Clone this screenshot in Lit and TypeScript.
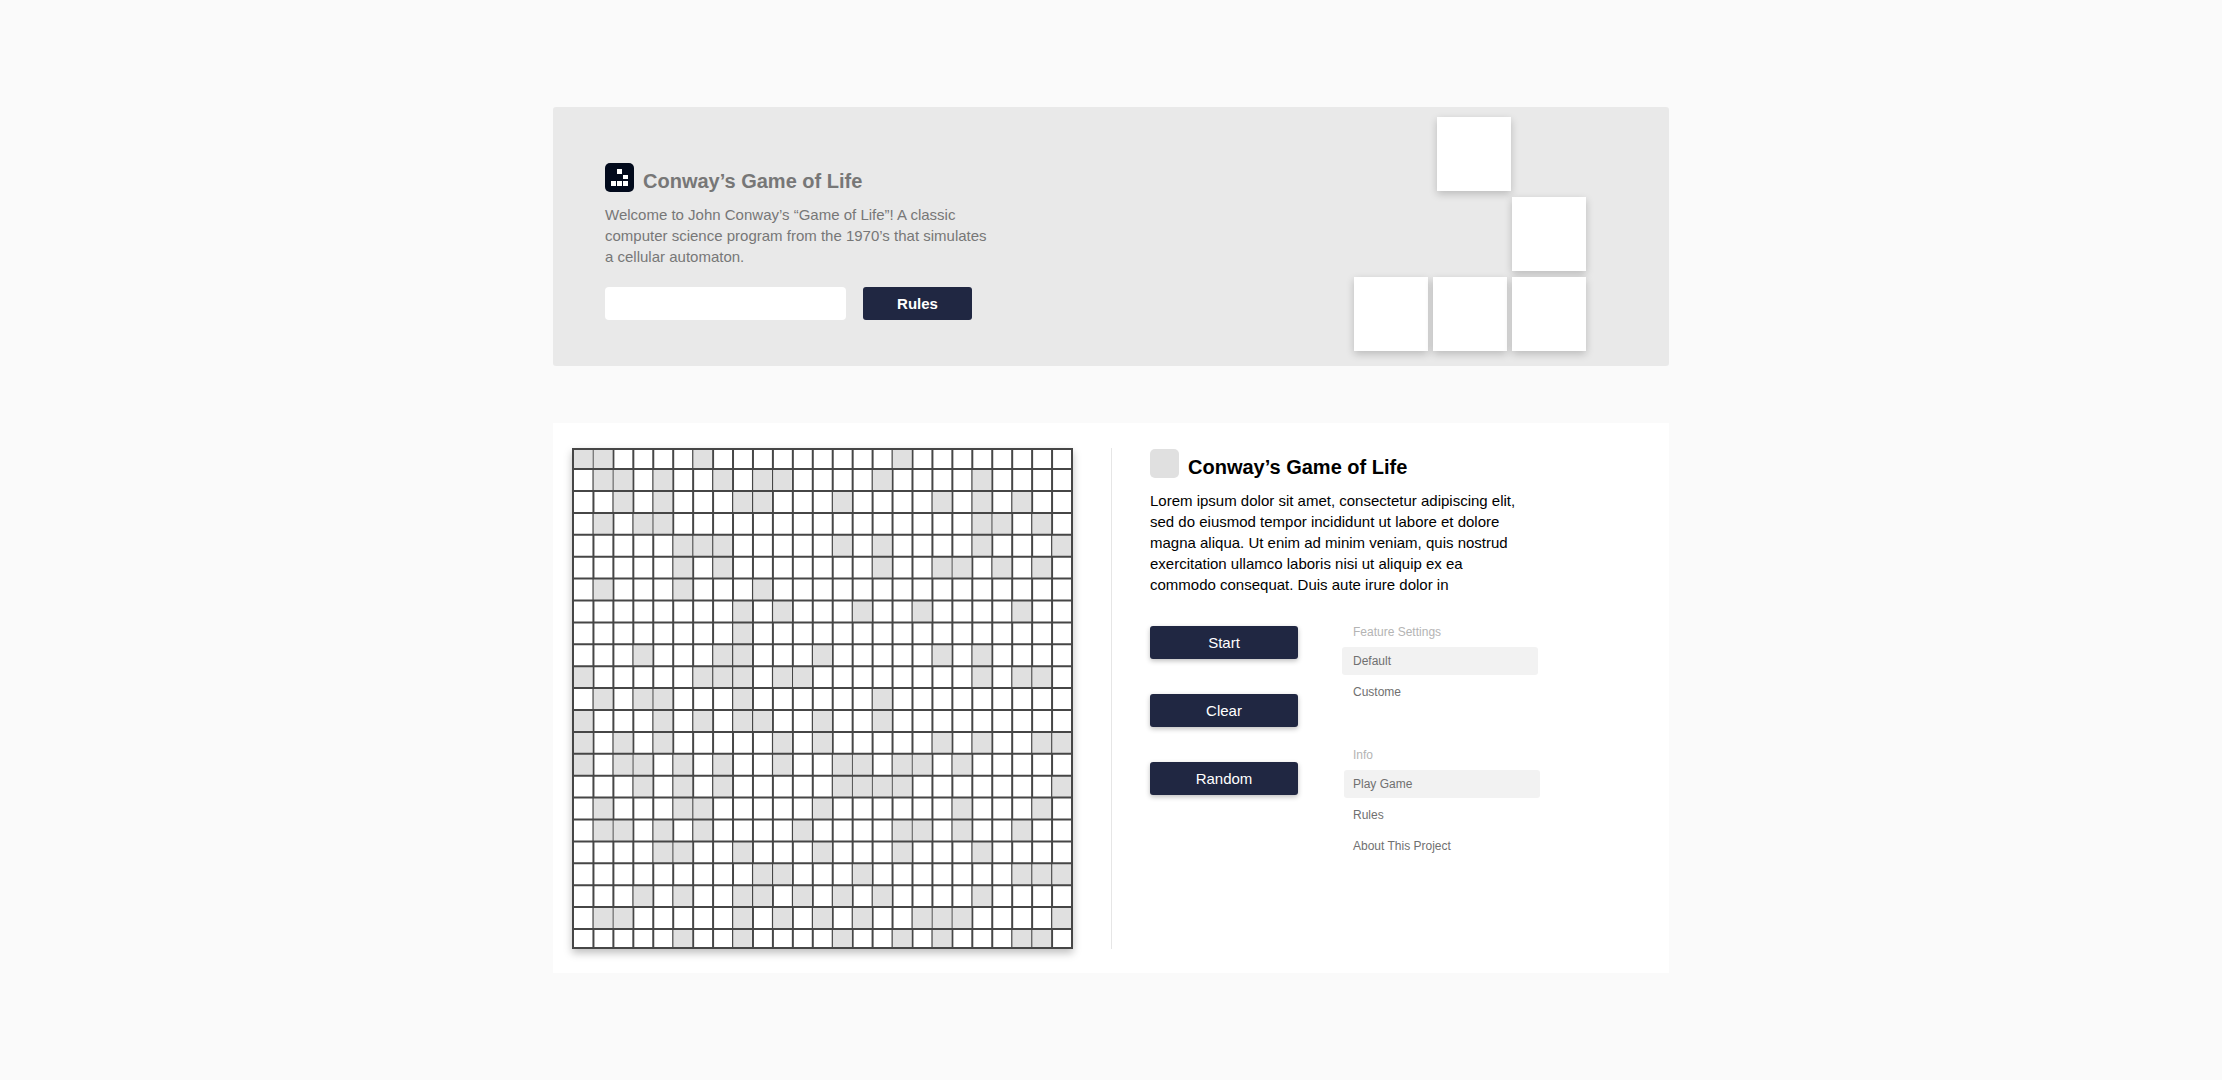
import { LitElement, html, svg, css } from "lit";
import { customElement, property, state } from "lit/decorators.js";
import { classMap } from "lit/directives/class-map.js";

const COLUMNS = 25;
const ROWS = 23;

/** Live columns of the opening generation, one list per row. */
const SEED: number[][] = [
  [0, 1, 6, 16],
  [1, 2, 4, 7, 9, 10, 15, 20],
  [2, 4, 8, 9, 13, 18, 20, 22],
  [1, 3, 4, 20, 21, 23],
  [5, 6, 7, 13, 15, 20, 24],
  [5, 7, 15, 18, 19, 21, 23],
  [1, 5, 9],
  [8, 10, 14, 17, 22],
  [8],
  [3, 7, 8, 12, 18, 20],
  [0, 6, 7, 8, 10, 11, 20, 22, 23],
  [1, 3, 4, 8, 15],
  [0, 4, 6, 8, 9, 12, 15],
  [0, 2, 4, 10, 12, 18, 20, 23, 24],
  [0, 2, 3, 5, 7, 10, 13, 14, 16, 17, 19],
  [3, 5, 7, 13, 14, 15, 16, 24],
  [1, 5, 6, 12, 19, 23],
  [1, 2, 4, 6, 11, 16, 17, 19, 22],
  [4, 5, 8, 12, 16, 20],
  [9, 10, 14, 22, 23, 24],
  [3, 5, 8, 9, 11, 13, 15, 20],
  [1, 2, 8, 10, 12, 14, 17, 18, 19, 24],
  [5, 8, 13, 16, 18, 22, 23],
];

const seedCells = () =>
  SEED.map((live) => Array.from({ length: COLUMNS }, (_, c) => live.includes(c)));

const nextGeneration = (cells: boolean[][]) =>
  cells.map((row, r) =>
    row.map((alive, c) => {
      let n = 0;
      for (let y = r - 1; y <= r + 1; y++)
        for (let x = c - 1; x <= c + 1; x++)
          if ((y !== r || x !== c) && cells[y]?.[x]) n++;
      return n === 3 || (alive && n === 2);
    })
  );

/* Edges of the drawing: the outer rows are slightly shorter than the inner ones. */
const colX = (i: number) => 1.5 + (i * 498.5) / COLUMNS;
const rowY = (j: number) =>
  j === 0 ? 1 : j === ROWS ? 500 : 21.1 + ((j - 1) * 459.9) / (ROWS - 2);

@customElement("life-board")
export class LifeBoard extends LitElement {
  @property({ attribute: false }) cells: boolean[][] = [];

  static styles = css`
    :host {
      display: block;
    }
    .board {
      display: block;
      width: 100%;
      height: auto;
      background: #fff;
      box-shadow: 0 4px 8px rgba(0, 0, 0, 0.25);
    }
    .live {
      fill: #e0e0e0;
    }
    .line {
      stroke: #464646;
      stroke-width: 2;
    }
    .frame {
      fill: none;
      stroke: #464646;
      stroke-width: 2;
    }
  `;

  render() {
    const inner = (n: number) => Array.from({ length: n - 1 }, (_, i) => i + 1);
    return html`<svg class="board" viewBox="0 0 501 501" role="img" aria-label="Board">
      ${inner(COLUMNS).map(
        (i) => svg`<line class="line" x1=${colX(i)} x2=${colX(i)} y1="1" y2="500" />`
      )}
      ${this.cells.map((row, r) =>
        row.map((alive, c) =>
          alive
            ? svg`<rect class="live" x=${colX(c) + 0.2} y=${rowY(r)}
                width=${colX(c + 1) - colX(c) - 1.2} height=${rowY(r + 1) - rowY(r)} />`
            : null
        )
      )}
      ${inner(ROWS).map(
        (j) => svg`<line class="line" x1="1" x2="500" y1=${rowY(j)} y2=${rowY(j)} />`
      )}
      <rect class="frame" x="1" y="1" width="499" height="499" />
    </svg>`;
  }
}

@customElement("app-root")
export class AppRoot extends LitElement {
  @state() private cells = seedCells();
  @state() private setting = "Default";
  private timer = 0;

  static styles = css`
    :host {
      display: block;
      font-family: "Liberation Sans", Arial, Helvetica, sans-serif;
      font-size: 15px;
      line-height: 21px;
      color: #000;
    }
    * {
      box-sizing: border-box;
    }
    .page {
      min-height: 100vh;
      padding: 107px 24px;
      background: #fafafa;
      display: flex;
      flex-direction: column;
      align-items: center;
      gap: 57px;
    }
    .hero,
    .game {
      width: 100%;
      max-width: 1116px;
      display: flex;
    }
    .hero {
      justify-content: space-between;
      gap: 24px;
      padding: 10px 83px 15px 52px;
      border-radius: 3px;
      background: #e9e9e9;
      color: #777;
    }
    .intro {
      max-width: 390px;
      padding-top: 46px;
    }
    .heading {
      display: flex;
      align-items: flex-end;
      gap: 9px;
    }
    h1,
    h2 {
      margin: 0;
      font-size: 20px;
      line-height: 22px;
      font-weight: bold;
    }
    .badge {
      flex: none;
      width: 29px;
      height: 29px;
      border-radius: 5px;
    }
    .blank {
      background: #e0e0e0;
    }
    p {
      margin: 12px 0 0;
    }
    .form {
      display: flex;
      gap: 17px;
      margin-top: 20px;
    }
    .field {
      width: 241px;
      height: 33px;
      padding: 0 10px;
      border: 0;
      border-radius: 4px;
      background: #fff;
      font: inherit;
    }
    .button {
      height: 33px;
      padding: 0;
      border: 0;
      border-radius: 3px;
      background: #202742;
      color: #fff;
      font: inherit;
      cursor: pointer;
    }
    .strong {
      width: 109px;
      font-weight: bold;
    }
    .glider {
      display: flex;
      flex-direction: column;
      align-items: flex-end;
      gap: 6px;
    }
    .tiles {
      display: flex;
      gap: 5px;
    }
    .inset {
      padding-right: 75px;
    }
    .tile {
      width: 74px;
      height: 74px;
      background: #fff;
      box-shadow: 0 3px 8px rgba(0, 0, 0, 0.2);
    }
    .game {
      padding: 25px 19px 24px;
      background: #fff;
    }
    .cells {
      flex: 0 1 501px;
    }
    .side {
      flex: 1;
      margin-left: 38px;
      padding: 1px 0 0 38px;
      border-left: 1px solid #e6e6e6;
    }
    .text {
      max-width: 380px;
    }
    .panel {
      display: flex;
      gap: 44px;
      margin-top: 31px;
    }
    .actions {
      display: flex;
      flex-direction: column;
      gap: 35px;
      width: 148px;
    }
    .raised {
      box-shadow: 0 2px 5px rgba(0, 0, 0, 0.25);
    }
    .menus {
      display: flex;
      flex-direction: column;
      gap: 43px;
      font-size: 12px;
      line-height: 14px;
      color: #707070;
    }
    .menu {
      display: flex;
      flex-direction: column;
      gap: 3px;
      width: 196px;
    }
    .caption {
      margin: 0;
      padding: 0 11px 6px;
      font-size: 12px;
      line-height: 12px;
      font-weight: normal;
      color: #b4b4b4;
    }
    .item {
      display: flex;
      align-items: center;
      height: 28px;
      padding: 0 11px;
      border: 0;
      border-radius: 3px;
      background: none;
      color: inherit;
      font: inherit;
      text-decoration: none;
      cursor: pointer;
    }
    .info {
      margin-left: 2px;
    }
    .info .caption,
    .info .item {
      padding-left: 9px;
    }
    .current {
      background: #f2f2f2;
    }
  `;

  disconnectedCallback() {
    super.disconnectedCallback();
    this.stop();
  }

  private stop() {
    clearInterval(this.timer);
    this.timer = 0;
  }

  private start = () => {
    if (!this.timer)
      this.timer = window.setInterval(() => (this.cells = nextGeneration(this.cells)), 300);
  };

  private clear = () => {
    this.stop();
    this.cells = this.cells.map((row) => row.map(() => false));
  };

  private random = () => {
    this.cells = this.cells.map((row) => row.map(() => Math.random() < 0.25));
  };

  private tiles(count: number, inset = false) {
    return html`<div class=${classMap({ tiles: true, inset })}>
      ${Array.from({ length: count }, () => html`<div class="tile"></div>`)}
    </div>`;
  }

  render() {
    return html`<div class="page">
      <header class="hero">
        <div class="intro">
          <div class="heading">
            <svg class="badge" viewBox="0 0 29 29" aria-hidden="true">
              <rect width="29" height="29" fill="#020a1c" />
              <path
                fill="#fff"
                d="M12 6h5v5h-5zM18 12h5v4h-5zM6 18h5v5H6zM12 18h5v5h-5zM18 18h5v5h-5z"
              />
            </svg>
            <h1>Conway’s Game of Life</h1>
          </div>
          <p>
            Welcome to John Conway’s “Game of Life”! A classic computer science program from
            the 1970’s that simulates a cellular automaton.
          </p>
          <form class="form" @submit=${(e: Event) => e.preventDefault()}>
            <input class="field" type="text" aria-label="Rules" />
            <button class="button strong">Rules</button>
          </form>
        </div>
        <div class="glider" aria-hidden="true">
          ${this.tiles(1, true)} ${this.tiles(1)} ${this.tiles(3)}
        </div>
      </header>

      <main class="game">
        <life-board class="cells" .cells=${this.cells}></life-board>
        <section class="side">
          <div class="heading">
            <div class="badge blank"></div>
            <h2>Conway’s Game of Life</h2>
          </div>
          <p class="text">
            Lorem ipsum dolor sit amet, consectetur adipiscing elit, sed do eiusmod tempor
            incididunt ut labore et dolore magna aliqua. Ut enim ad minim veniam, quis nostrud
            exercitation ullamco laboris nisi ut aliquip ex ea<br />commodo consequat. Duis
            aute irure dolor in
          </p>
          <div class="panel">
            <div class="actions">
              <button class="button raised" @click=${this.start}>Start</button>
              <button class="button raised" @click=${this.clear}>Clear</button>
              <button class="button raised" @click=${this.random}>Random</button>
            </div>
            <div class="menus">
              <div class="menu">
                <h3 class="caption">Feature Settings</h3>
                ${["Default", "Custome"].map(
                  (name) => html`<button
                    class=${classMap({ item: true, current: name === this.setting })}
                    @click=${() => (this.setting = name)}
                  >
                    ${name}
                  </button>`
                )}
              </div>
              <nav class="menu info">
                <h3 class="caption">Info</h3>
                <a class="item current" href="#play">Play Game</a>
                <a class="item" href="#rules">Rules</a>
                <a class="item" href="#about">About This Project</a>
              </nav>
            </div>
          </div>
        </section>
      </main>
    </div>`;
  }
}
